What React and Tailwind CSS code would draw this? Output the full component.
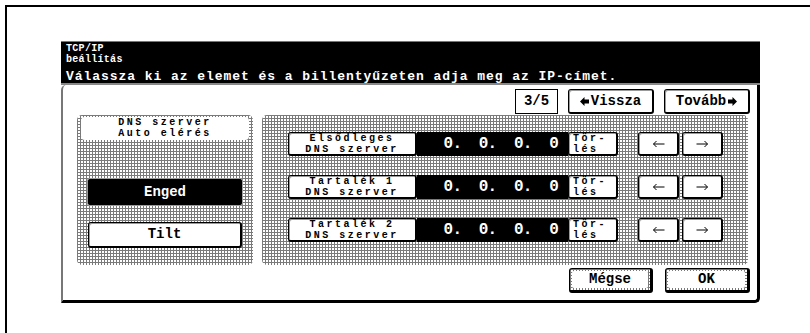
import React from "react";

const mono = "font-['Liberation_Mono','DejaVu_Sans_Mono',monospace]";
const pat =
  "bg-white bg-[linear-gradient(90deg,#7a7a7a_1px,transparent_1px),linear-gradient(#7a7a7a_1px,transparent_1px)] bg-[size:3px_3px]";
const btn =
  "bg-white border border-black border-r-2 border-b-2 rounded-[3px] shadow-[inset_1px_1px_0_#9a9a9a]";
const small = "text-[10px] font-bold tracking-[2.5px] leading-[11px]";

function LeftArrow() {
  return (
    <svg width="13" height="8" viewBox="0 0 13 8" className="block">
      <path d="M12.5 4H1.5M4.5 1L1.5 4L4.5 7" fill="none" stroke="#000" strokeWidth="1" />
    </svg>
  );
}
function RightArrow() {
  return (
    <svg width="13" height="8" viewBox="0 0 13 8" className="block">
      <path d="M0.5 4H11.5M8.5 1L11.5 4L8.5 7" fill="none" stroke="#000" strokeWidth="1" />
    </svg>
  );
}
function FatLeft() {
  return (
    <svg width="9" height="9" viewBox="0 0 9 9" className="block">
      <polygon points="0,4.5 4.5,0 4.5,2.5 9,2.5 9,6.5 4.5,6.5 4.5,9" fill="#000" />
    </svg>
  );
}
function FatRight() {
  return (
    <svg width="9" height="9" viewBox="0 0 9 9" className="block">
      <polygon points="9,4.5 4.5,0 4.5,2.5 0,2.5 0,6.5 4.5,6.5 4.5,9" fill="#000" />
    </svg>
  );
}

function Row({ l1, l2 }) {
  return (
    <div className="flex h-[24px] items-stretch">
      <div className={`${btn} w-[129px] flex flex-col items-center justify-center ${small}`}>
        <span className="whitespace-pre">{l1}</span>
        <span className="whitespace-pre">{l2}</span>
      </div>
      <div className="w-[151px] bg-black text-white flex items-center justify-end pr-[10px] text-[16px] font-bold tracking-[-0.8px] whitespace-pre">
        {"0.  0.  0.  0"}
      </div>
      <div className={`${btn} w-[50px] flex flex-col justify-center pl-[4px] ${small}`}>
        <span>Tör-</span>
        <span>lés</span>
      </div>
      <div className="w-[20px]" />
      <div className={`${btn} w-[41px] flex items-center justify-center`}>
        <LeftArrow />
      </div>
      <div className="w-[3px]" />
      <div className={`${btn} w-[41px] flex items-center justify-center`}>
        <RightArrow />
      </div>
    </div>
  );
}

export default function App() {
  return (
    <div className={`w-[810px] h-[333px] bg-white overflow-hidden ${mono}`}>
      <div className="ml-[5px] mt-[5px] h-[328px] border-t-2 border-l-2 border-black pl-[54px] pt-[34px]">
        <div className="w-[699px]">
          {/* header */}
          <div className="bg-black h-[42px] text-white pl-[5px] pt-[1px] border-t border-[#777]">
            <div className="text-[10px] font-bold leading-[11px] tracking-[0.3px]">
              <div>TCP/IP</div>
              <div>beállítás</div>
            </div>
            <div className="text-[13px] font-bold tracking-[0.95px] leading-[15px] mt-[4px] whitespace-nowrap">
              Válassza ki az elemet és a billentyűzeten adja meg az IP-címet.
            </div>
          </div>
          <div className="h-[2px] bg-[#888]" />
          {/* panel */}
          <div className="h-[218px] bg-white border-l-2 border-l-[#777] border-r-[3px] border-b-[3px] border-black rounded-tl-[5px] rounded-br-[5px] flex flex-col">
            {/* top row */}
            <div className="flex justify-end gap-[10px] pr-[7px] mt-[4px] h-[25px]">
              <div className="w-[43px] border border-black bg-white flex items-center justify-center text-[14px] font-bold">
                3/5
              </div>
              <div className={`${btn} w-[86px] flex items-center justify-center gap-[2px] text-[14px] font-bold`}>
                <FatLeft />
                <span>Vissza</span>
              </div>
              <div className={`${btn} w-[86px] flex items-center justify-center gap-[2px] text-[14px] font-bold`}>
                <span>Tovább</span>
                <FatRight />
              </div>
            </div>
            {/* gray panels */}
            <div className="flex gap-[9px] pl-[14px] mt-[1px] h-[150px]">
              <div className={`w-[176px] rounded-[5px] ${pat} flex flex-col pt-[2px] px-[4px]`}>
                <div className={`h-[23px] bg-white rounded-[4px] flex flex-col items-center ${small}`}>
                  <span className="whitespace-pre">DNS szerver</span>
                  <span className="whitespace-pre">Auto elérés</span>
                </div>
                <div className="mt-[39px] mx-[7px] h-[26px] bg-black text-white border border-black rounded-[2px] shadow-[0_0_0_1px_#999] flex items-center justify-center text-[14px] font-bold">
                  Enged
                </div>
                <div className={`mt-[17px] mx-[7px] h-[26px] ${btn} flex items-center justify-center text-[14px] font-bold`}>
                  Tilt
                </div>
              </div>
              <div className={`w-[486px] rounded-[5px] ${pat} flex flex-col pl-[26px] pt-[17px] gap-[19px]`}>
                <Row l1="Elsődleges" l2="DNS szerver" />
                <Row l1="Tartalék 1" l2="DNS szerver" />
                <Row l1="Tartalék 2" l2="DNS szerver" />
              </div>
            </div>
            {/* bottom row */}
            <div className="flex justify-end gap-[12px] pr-[7px] mt-[3px] h-[25px]">
              <div className={`w-[84px] border border-black border-r-[3px] border-b-[3px] rounded-[3px] ${pat} p-[2px]`}>
                <div className="h-full bg-white rounded-[2px] flex items-center justify-center text-[14px] font-bold">
                  Mégse
                </div>
              </div>
              <div className={`w-[85px] border border-black border-r-[3px] border-b-[3px] rounded-[3px] ${pat} p-[2px]`}>
                <div className="h-full bg-white rounded-[2px] flex items-center justify-center text-[14px] font-bold">
                  OK
                </div>
              </div>
            </div>
          </div>
        </div>
      </div>
    </div>
  );
}
